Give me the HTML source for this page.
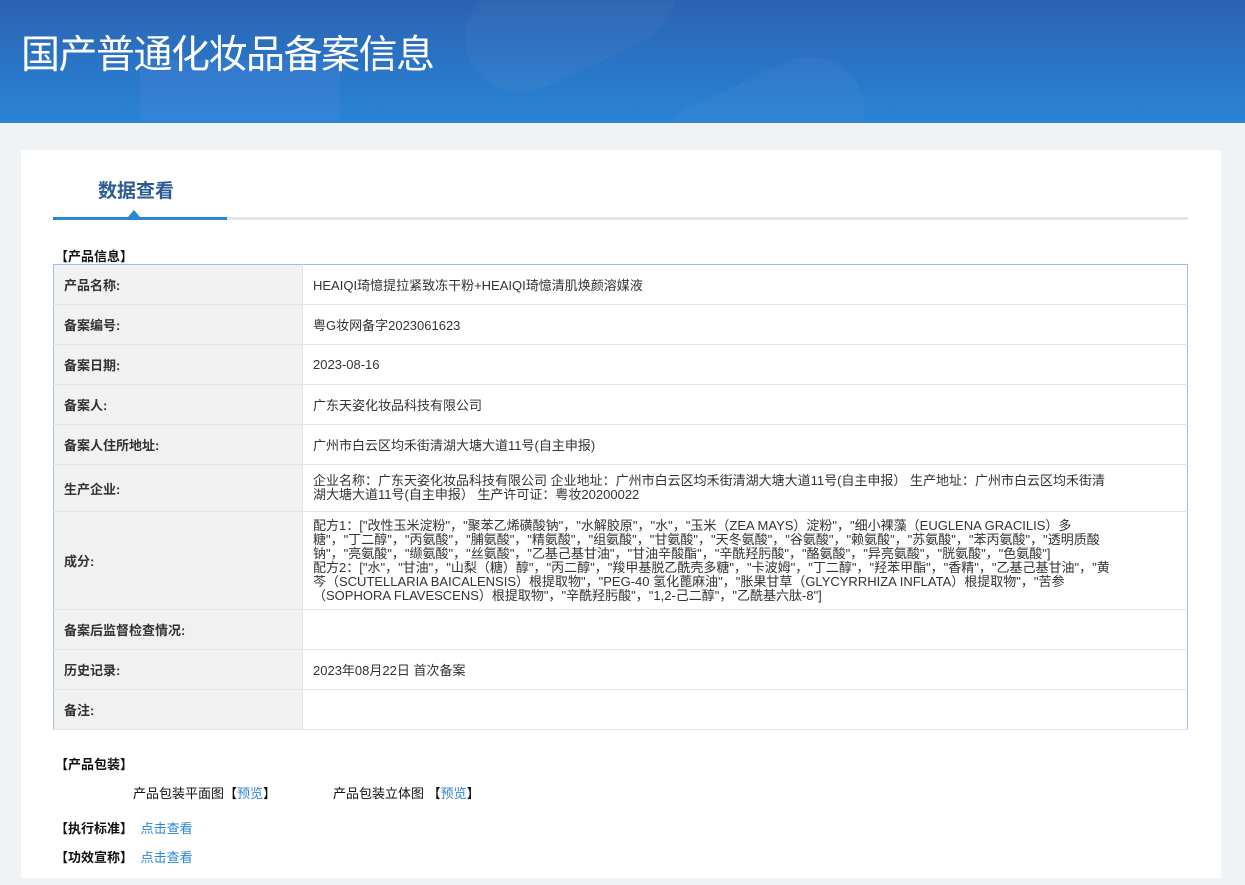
<!DOCTYPE html>
<html><head><meta charset="utf-8"><style>
*{margin:0;padding:0;box-sizing:border-box}
body{width:1245px;height:885px;overflow:hidden;background:#f0f3f6;font-family:"Liberation Sans","Noto Sans CJK SC",sans-serif;font-size:13px;color:#333;position:relative}
.hdr{position:absolute;left:0;top:0;width:1245px;height:123px;background:linear-gradient(180deg,#2c62b0 0%,#2a77c9 60%,#2a83d4 100%);overflow:hidden}
.hdr h1{position:absolute;left:21px;top:24px;font-size:39px;font-weight:normal;color:#fff;letter-spacing:-1.5px;font-family:"Noto Sans CJK SC",sans-serif}
.card{position:absolute;left:21px;top:150px;width:1200px;height:728px;background:#fff}
.tab{position:absolute;left:77px;top:26px;font-size:19px;font-weight:bold;color:#2b5a95;font-family:"Noto Sans CJK SC",sans-serif}
.line{position:absolute;left:32px;top:67px;width:1135px;height:3px;background:#e5e5e5}
.line b{position:absolute;left:0;top:0;width:174px;height:3px;background:#2b86d6}
.tri{position:absolute;left:107px;top:60px;width:0;height:0;border-left:6px solid transparent;border-right:6px solid transparent;border-bottom:7px solid #2b86d6}
.sec{position:absolute;font-weight:bold;color:#111}
table{position:absolute;left:32px;top:114px;width:1135px;border-collapse:collapse;border:1px solid #9dbce8}
td{border-bottom:1px solid #e4e4e4;padding:0 10px;height:40px;vertical-align:middle}
td.l{width:249px;background:#f1f1f1;font-weight:bold;color:#333;border-right:1px solid #e4e4e4}
td.v{color:#333}
.small{line-height:14px;font-size:13px;padding-right:75px}
a{color:#2b86d6;text-decoration:none}
</style></head><body>
<div class="hdr">
<div style="position:absolute;left:140px;top:60px;width:200px;height:80px;background:rgba(90,140,230,.2)"></div>
<div style="position:absolute;left:460px;top:-40px;width:220px;height:110px;border-radius:60px;background:rgba(255,255,255,.03);transform:rotate(-25deg)"></div>
<div style="position:absolute;left:650px;top:80px;width:220px;height:110px;border-radius:60px;background:rgba(255,255,255,.03);transform:rotate(-25deg)"></div>
<h1>国产普通化妆品备案信息</h1></div>
<div class="card">
<div class="tab">数据查看</div>
<div class="line"><b></b></div><div class="tri"></div>
<div class="sec" style="left:34px;top:96px">【产品信息】</div>
<table>
<tr><td class="l">产品名称:</td><td class="v">HEAIQI琦憶提拉紧致冻干粉+HEAIQI琦憶清肌焕颜溶媒液</td></tr>
<tr><td class="l">备案编号:</td><td class="v">粤G妆网备字2023061623</td></tr>
<tr><td class="l">备案日期:</td><td class="v">2023-08-16</td></tr>
<tr><td class="l">备案人:</td><td class="v">广东天姿化妆品科技有限公司</td></tr>
<tr><td class="l">备案人住所地址:</td><td class="v">广州市白云区均禾街清湖大塘大道11号(自主申报)</td></tr>
<tr><td class="l" style="height:47px">生产企业:</td><td class="v small">企业名称：广东天姿化妆品科技有限公司 企业地址：广州市白云区均禾街清湖大塘大道11号(自主申报）  生产地址：广州市白云区均禾街清湖大塘大道11号(自主申报）  生产许可证：粤妆20200022</td></tr>
<tr><td class="l" style="height:98px">成分:</td><td class="v small">配方1：["改性玉米淀粉"，"聚苯乙烯磺酸钠"，"水解胶原"，"水"，"玉米（ZEA MAYS）淀粉"，"细小裸藻（EUGLENA GRACILIS）多糖"，"丁二醇"，"丙氨酸"，"脯氨酸"，"精氨酸"，"组氨酸"，"甘氨酸"，"天冬氨酸"，"谷氨酸"，"赖氨酸"，"苏氨酸"，"苯丙氨酸"，"透明质酸钠"，"亮氨酸"，"缬氨酸"，"丝氨酸"，"乙基己基甘油"，"甘油辛酸酯"，"辛酰羟肟酸"，"酪氨酸"，"异亮氨酸"，"胱氨酸"，"色氨酸"]<br>配方2：["水"，"甘油"，"山梨（糖）醇"，"丙二醇"，"羧甲基脱乙酰壳多糖"，"卡波姆"，"丁二醇"，"羟苯甲酯"，"香精"，"乙基己基甘油"，"黄芩（SCUTELLARIA BAICALENSIS）根提取物"，"PEG-40 氢化蓖麻油"，"胀果甘草（GLYCYRRHIZA INFLATA）根提取物"，"苦参（SOPHORA FLAVESCENS）根提取物"，"辛酰羟肟酸"，"1,2-己二醇"，"乙酰基六肽-8"]</td></tr>
<tr><td class="l">备案后监督检查情况:</td><td class="v"></td></tr>
<tr><td class="l">历史记录:</td><td class="v">2023年08月22日 首次备案</td></tr>
<tr><td class="l">备注:</td><td class="v"></td></tr>
</table>
<div class="sec" style="left:34px;top:604px">【产品包装】</div>
<div style="position:absolute;left:112px;top:633px;color:#111">产品包装平面图【<a>预览</a>】</div>
<div style="position:absolute;left:312px;top:633px;color:#111">产品包装立体图 【<a>预览</a>】</div>
<div class="sec" style="left:34px;top:668px">【执行标准】 <a style="font-weight:normal;margin-left:4px">点击查看</a></div>
<div class="sec" style="left:34px;top:697px">【功效宣称】 <a style="font-weight:normal;margin-left:4px">点击查看</a></div>
</div>
</body></html>
